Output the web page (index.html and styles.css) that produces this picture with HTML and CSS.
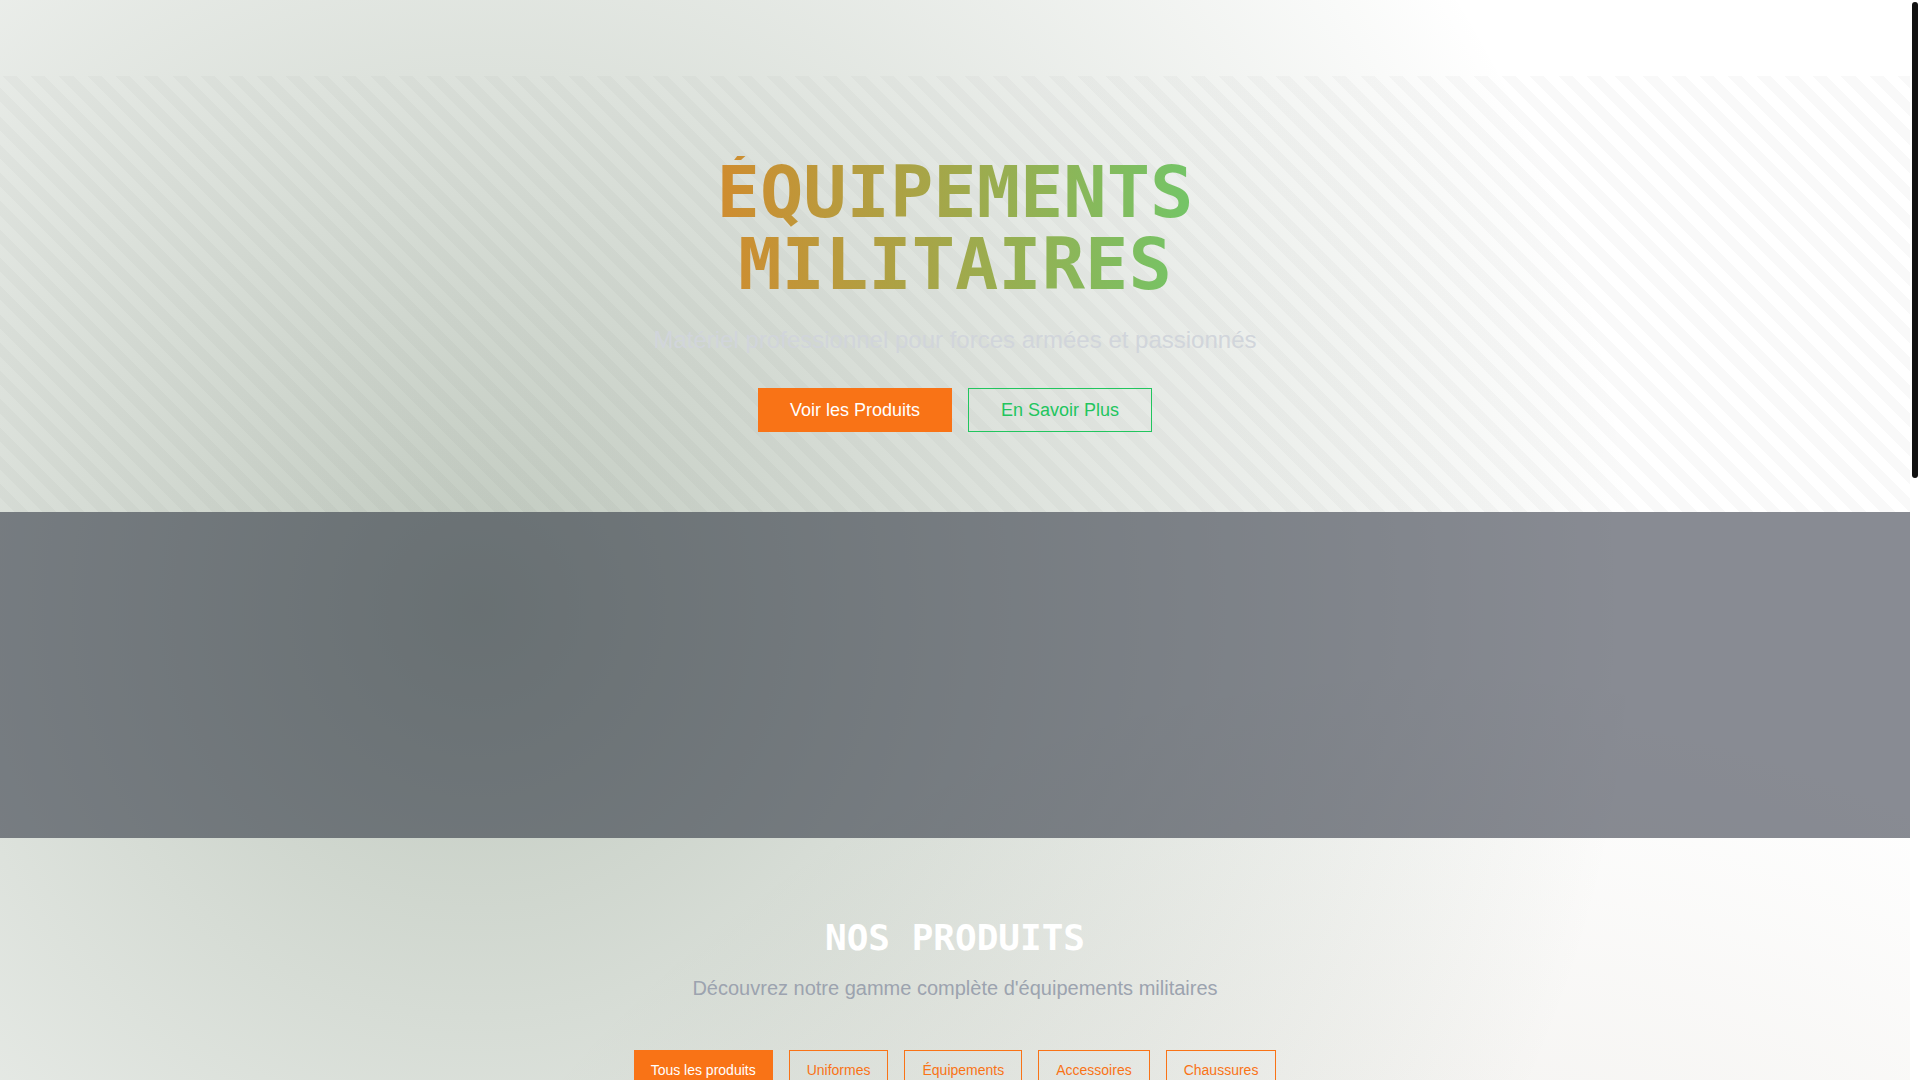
FILE: index.html
```html
<!DOCTYPE html>
<html lang="fr">
<head>
    <meta charset="UTF-8">
    <meta name="viewport" content="width=device-width, initial-scale=1.0">
    <title>Équipements Militaires</title>
    <link rel="stylesheet" href="styles.css">
</head>
<body>
    <div class="page">
        <header class="topbar"></header>

        <main>
            <section class="hero">
                <div class="hero-content">
                    <h1>ÉQUIPEMENTS<br>MILITAIRES</h1>
                    <p>Matériel professionnel pour forces armées et passionnés</p>
                    <div class="actions">
                        <button type="button" class="btn btn-lg btn-primary">Voir les Produits</button>
                        <button type="button" class="btn btn-lg btn-green">En Savoir Plus</button>
                    </div>
                </div>
            </section>

            <section class="features"></section>

            <section class="products">
                <h2>NOS PRODUITS</h2>
                <p>Découvrez notre gamme complète d'équipements militaires</p>
                <div class="filters">
                    <button type="button" class="btn btn-primary">Tous les produits</button>
                    <button type="button" class="btn btn-outline">Uniformes</button>
                    <button type="button" class="btn btn-outline">Équipements</button>
                    <button type="button" class="btn btn-outline">Accessoires</button>
                    <button type="button" class="btn btn-outline">Chaussures</button>
                </div>
            </section>
        </main>
    </div>
    <div class="scrollbar"><div class="thumb"></div></div>
</body>
</html>
```

FILE: styles.css
```css
* {
    margin: 0;
    padding: 0;
    box-sizing: border-box;
}
body {
    padding-right: 10px;
    background: #fff;
    font-family: "Liberation Sans", Arial, sans-serif;
}
.page {
    background-image:
        radial-gradient(circle at 25% 25%, rgba(45, 76, 40, 0.3) 0%, transparent 50%),
        radial-gradient(circle at 75% 75%, rgba(92, 75, 40, 0.15) 0%, transparent 50%);
}
.topbar {
    height: 76px;
}

/* scrollbar */
.scrollbar {
    position: fixed;
    top: 0;
    right: 0;
    bottom: 0;
    width: 10px;
    padding: 2px;
    background: #fff;
}
.thumb {
    height: 476px;
    background: #111;
    border-radius: 3px;
}

/* hero */
.hero {
    padding: 80px 16px;
    text-align: center;
    background: repeating-linear-gradient(45deg, transparent, transparent 10px, rgba(0, 0, 0, 0.025) 10px, rgba(0, 0, 0, 0.025) 20px);
}
.hero-content {
    max-width: 896px;
    margin: 0 auto;
}
.hero h1 {
    margin-bottom: 24px;
    font-family: "DejaVu Sans Mono", monospace;
    font-size: 72px;
    line-height: 72px;
    font-weight: bold;
    color: transparent;
    background: linear-gradient(to right, #f97316, #4ade80);
    -webkit-background-clip: text;
    background-clip: text;
}
.hero p {
    margin-bottom: 32px;
    font-size: 24px;
    line-height: 32px;
    color: #d1d5db;
}
.actions,
.filters {
    display: flex;
    flex-wrap: wrap;
    justify-content: center;
    gap: 16px;
}

/* buttons */
.btn {
    height: 40px;
    padding: 0 17px;
    border: none;
    background: transparent;
    font-family: inherit;
    font-size: 14px;
    cursor: pointer;
}
.btn-lg {
    height: 44px;
    padding: 0 32px;
    font-size: 18px;
}
.btn-primary {
    background: #f97316;
    color: #fff;
}
.btn-green {
    border: 1px solid #22c55e;
    color: #22c55e;
}
.btn-outline {
    border: 1px solid #f97316;
    color: #f97316;
}

.features {
    height: 326px;
    background: rgba(17, 24, 39, 0.5);
}

/* products */
.products {
    min-height: 1592px;
    padding: 80px 16px;
    text-align: center;
}
.products h2 {
    margin-bottom: 16px;
    font-family: "DejaVu Sans Mono", monospace;
    font-size: 36px;
    line-height: 40px;
    color: #fff;
}
.products p {
    margin-bottom: 48px;
    font-size: 20px;
    line-height: 28px;
    color: #9ca3af;
}
```
